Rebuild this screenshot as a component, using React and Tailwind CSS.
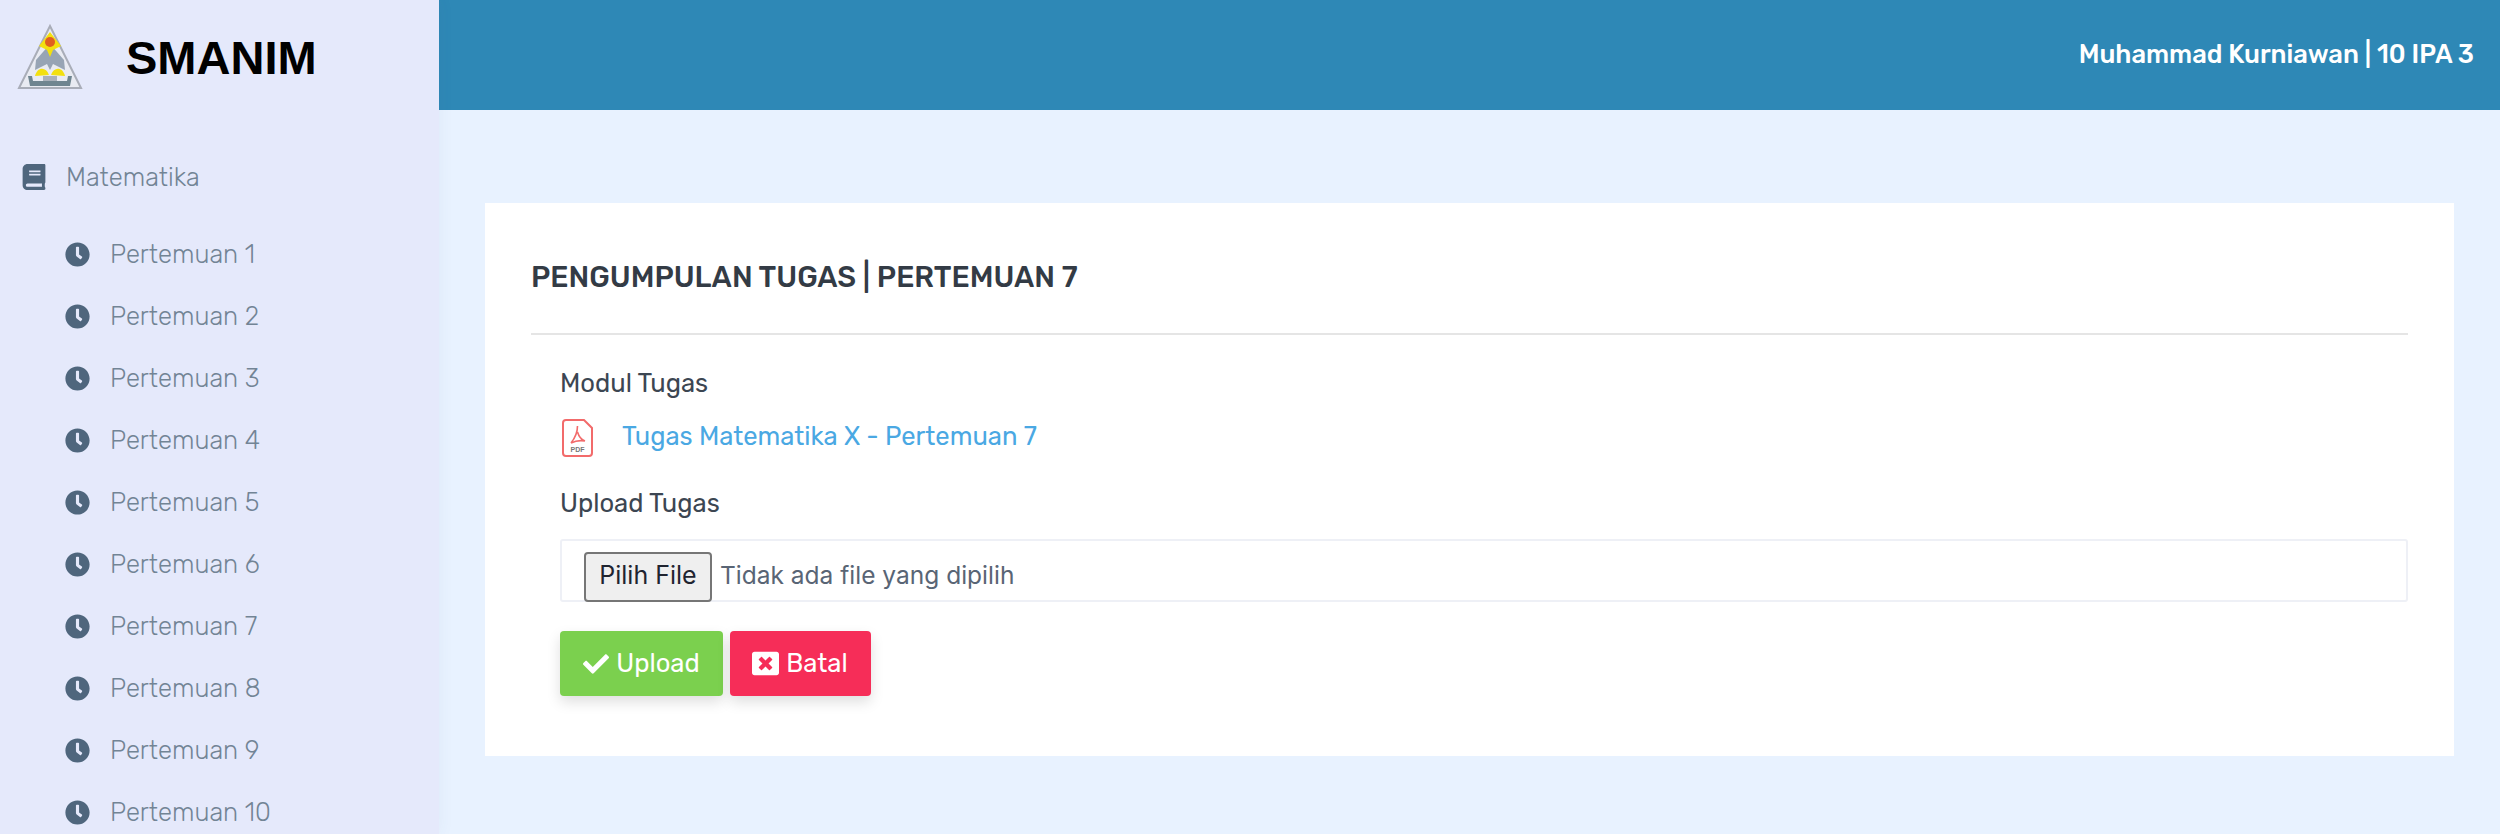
import React from "react";
import { FaBook, FaClock, FaCheck, FaWindowClose } from "react-icons/fa";

const meetings = [1, 2, 3, 4, 5, 6, 7, 8, 9, 10];

function Logo() {
  return (
    <svg width="66" height="66" viewBox="0 0 66 66" className="block">
      <path d="M33 2 L64 64 L2 64 Z" fill="#e9ebf2" stroke="#a9adb8" strokeWidth="2" />
      <path d="M33 20 L47 36 L48 46 L36 40 L33 46 L30 40 L18 46 L19 36 Z" fill="#97a4b4" />
      <path d="M33 8 L44 22 L36 26 L33 33 L30 26 L22 22 Z" fill="#f3e00f" />
      <circle cx="33" cy="18" r="5" fill="#e0601f" />
      <path d="M18 52 C20 43 29 42 32 51 Z" fill="#f3e00f" />
      <path d="M48 52 C46 43 37 42 34 51 Z" fill="#f3e00f" />
      <path d="M11 52 L15 52 L16 57 L50 57 L51 52 L55 52 L53 62 L13 62 Z" fill="#6f8590" />
      <rect x="26" y="52" width="14" height="5" fill="#a9b0ba" />
    </svg>
  );
}

function PdfIcon() {
  return (
    <svg width="31" height="38" viewBox="0 0 31 38" className="block">
      <path d="M4 1 H22 L30 9 V34 Q30 37 27 37 H4 Q1 37 1 34 V4 Q1 1 4 1 Z" fill="#fff" stroke="#f26b6b" strokeWidth="2" />
      <path d="M15.5 7 C15.5 14 13 19 9 24 M15.5 13 C17 18 20 21 23 22 C18 21 13 22 9 24" fill="none" stroke="#f26b6b" strokeWidth="1.6" />
      <text x="15.5" y="33" textAnchor="middle" fontSize="7" fontWeight="700" fill="#777" fontFamily="Liberation Sans, sans-serif">PDF</text>
    </svg>
  );
}

export default function App() {
  return (
    <div className="flex h-screen overflow-hidden bg-[#e8f2ff] font-['Rubik','Inter','Noto_Sans',sans-serif] text-[#3e4b5b]">
      <aside className="w-[439px] shrink-0 bg-[#e5e9fb] shadow-[0_0_16px_rgba(60,80,120,0.06)] z-10 flex flex-col">
        <div className="h-[110px] shrink-0 flex items-center pl-[17px] pt-[4px]">
          <Logo />
          <span className="ml-[43px] font-['Liberation_Sans',sans-serif] font-bold text-[47px] leading-none text-black">SMANIM</span>
        </div>
        <div className="flex items-center h-[62px] shrink-0 mt-[36px] pl-[22px]">
          <FaBook className="w-[24px] h-[26px] text-[#4f667d]" />
          <span className="ml-[20px] text-[25.6px] font-light text-[#728495]">Matematika</span>
        </div>
        <ul className="flex flex-col shrink-0 mt-[15px]">
          {meetings.map((n) => (
            <li key={n} className="flex items-center h-[62px] pl-[65px] shrink-0">
              <FaClock className="w-[25px] h-[25px] text-[#4f667d]" />
              <span className="ml-[20px] text-[25.6px] font-light text-[#728495]">Pertemuan {n}</span>
            </li>
          ))}
        </ul>
      </aside>
      <div className="flex-1 min-w-0 flex flex-col">
        <header className="h-[110px] shrink-0 bg-[#2e88b6] flex items-center justify-end pr-[26px] pb-[2px]">
          <span className="text-white text-[25.6px] font-medium">Muhammad Kurniawan | 10 IPA 3</span>
        </header>
        <main className="px-[46px] pt-[93px]">
          <section className="bg-white h-[553px] px-[46px] flex flex-col">
            <h1 className="h-[132px] flex items-center border-b-2 border-[#e5e5e5] shrink-0 pt-[20px] text-[29.3px] font-medium text-[#333b45]">
              PENGUMPULAN TUGAS | PERTEMUAN 7
            </h1>
            <div className="pl-[29px] flex flex-col">
              <p className="mt-[31px] text-[25.6px] leading-[34px] text-[#3c4652]">Modul Tugas</p>
              <a className="mt-[19px] flex items-center h-[38px] text-[25.6px] text-[#4aa8e3]">
                <span className="ml-[2px]"><PdfIcon /></span>
                <span className="ml-[29px] pb-[4px]">Tugas Matematika X - Pertemuan 7</span>
              </a>
              <p className="mt-[29px] text-[25.6px] leading-[34px] text-[#3c4652]">Upload Tugas</p>
              <div className="mt-[19px] h-[63px] rounded-[3px] border-2 border-[#eef0f6] flex items-start pl-[22px] pt-[11px]">
                <button className="h-[50px] w-[128px] shrink-0 rounded-[4px] border-2 border-[#767676] bg-[#efefef] text-[25px] text-[#1f2430] font-['Inter',sans-serif] pb-[2px]">Pilih File</button>
                <span className="ml-[8px] h-[50px] flex items-center pb-[4px] text-[24.5px] text-[#596575] font-['Inter',sans-serif]">Tidak ada file yang dipilih</span>
              </div>
              <div className="mt-[29px] flex gap-[7px]">
                <button className="h-[65px] w-[163px] rounded-[4px] bg-[#7bd04e] text-white text-[25.6px] flex items-center justify-center gap-[7px] shadow-[0_6px_14px_rgba(0,0,0,0.13)]">
                  <FaCheck className="w-[26px] h-[26px]" />
                  Upload
                </button>
                <button className="h-[65px] w-[141px] rounded-[4px] bg-[#f62d58] text-white text-[25.6px] flex items-center justify-center gap-[7px] pr-[1px] shadow-[0_6px_14px_rgba(0,0,0,0.13)]">
                  <FaWindowClose className="w-[27px] h-[27px]" />
                  Batal
                </button>
              </div>
            </div>
          </section>
        </main>
      </div>
    </div>
  );
}
